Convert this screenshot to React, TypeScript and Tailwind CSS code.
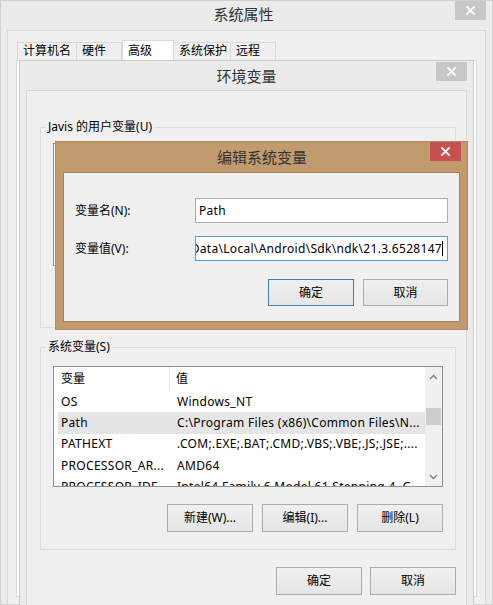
import type { ReactNode } from 'react';

const CloseX = ({ red }: { red?: boolean }) => (
  <div
    className={`flex items-center justify-center w-[31px] h-[19px] ${red ? 'bg-[#c75050]' : 'bg-[#c7c7c7]'}`}
  >
    <svg width="9" height="9" viewBox="0 0 9 9">
      <path d="M1 1 L8 8 M8 1 L1 8" stroke="#fff" strokeWidth="1.8" strokeLinecap="square" />
    </svg>
  </div>
);

const Btn = ({ children, def, w = 'w-[86px]', h = 'h-[28px]' }: { children: ReactNode; def?: boolean; w?: string; h?: string }) => (
  <div
    className={`flex items-center justify-center ${w} ${h} border ${def ? 'border-[#3c7fb1]' : 'border-[#acacac]'} bg-linear-to-b from-[#f0f0f0] to-[#e5e5e5] text-[12px] text-black`}
  >
    {children}
  </div>
);

const TitleBar = ({ title, red, h, textPad = '' }: { title: string; red?: boolean; h: string; textPad?: string }) => (
  <div className={`grid grid-cols-[1fr_auto_1fr] ${h} shrink-0`}>
    <div />
    <div className={`flex items-center text-[15px] text-[#333] ${textPad}`}>{title}</div>
    <div className="flex justify-end items-start">
      <CloseX red={red} />
    </div>
  </div>
);

const Chevron = ({ up }: { up?: boolean }) => (
  <svg width="9" height="6" viewBox="0 0 9 6">
    <path d={up ? 'M1 5 L4.5 1.5 L8 5' : 'M1 1 L4.5 4.5 L8 1'} fill="none" stroke="#7a7a7a" strokeWidth="1.3" />
  </svg>
);

const sysRows = [
  ['OS', 'Windows_NT'],
  ['Path', 'C:\\Program Files (x86)\\Common Files\\N...'],
  ['PATHEXT', '.COM;.EXE;.BAT;.CMD;.VBS;.VBE;.JS;.JSE;....'],
  ['PROCESSOR_AR...', 'AMD64'],
  ['PROCESSOR_IDE...', 'Intel64 Family 6 Model 61 Stepping 4, G...'],
];

const VarList = ({ rows, h, selected }: { rows: string[][]; h: string; selected?: number }) => (
  <div className={`flex ${h} border border-[#8e8f8f] bg-white overflow-hidden`}>
    <div className="flex-1 flex flex-col overflow-hidden">
      <div className="flex h-[24px] shrink-0 items-center">
        <div className="w-[116px] h-full flex items-center pl-[7px] border-r border-[#e5e5e5]">变量</div>
        <div className="pl-[6px]">值</div>
      </div>
      {rows.map(([k, v], i) => (
        <div
          key={k}
          className={`flex items-center h-[21.3px] shrink-0 ml-[4px] whitespace-nowrap tracking-[0.3px] ${i === selected ? 'bg-[#e5e5e5]' : ''}`}
        >
          <div className="w-[112px] pl-[3px]">{k}</div>
          <div className="pl-[7px]">{v}</div>
        </div>
      ))}
    </div>
    <div className="w-[17px] bg-[#f0f0f0] flex flex-col items-center">
      <div className="h-[19px] flex items-center justify-center">
        <Chevron up />
      </div>
      <div className="h-[22px]" />
      <div className="w-[15px] h-[17px] bg-[#cdcdcd]" />
      <div className="flex-1" />
      <div className="h-[19px] flex items-center justify-center">
        <Chevron />
      </div>
    </div>
  </div>
);

const Group = ({ label, children, className }: { label: string; children: ReactNode; className?: string }) => (
  <fieldset className={`border border-[#dcdcdc] w-[416px] ${className ?? ''}`}>
    <legend className="ml-[5px] px-[2px] leading-[16px] text-[12px]">{label}</legend>
    {children}
  </fieldset>
);

const tabs = [
  { t: '计算机名', w: 'w-[60px]' },
  { t: '硬件', w: 'w-[46px]' },
  { t: '高级', w: 'w-[52px]', on: true },
  { t: '系统保护', w: 'w-[58px]' },
  { t: '远程', w: 'w-[46px]' },
];

export default function App() {
  return (
    <div className="relative w-[493px] h-[605px] overflow-hidden bg-[#ebebeb] text-[12px] text-black font-[family-name:'Noto_Sans','Noto_Sans_CJK_SC',sans-serif]">
      {/* 系统属性 */}
      <div className="absolute inset-0 flex flex-col border border-[#d0d0d0] bg-[#ebebeb] px-[6px]">
        <TitleBar title="系统属性" h="h-[29px] -mx-[6px] pr-[6px]" textPad="pb-[3px]" />
        <div className="flex-1 flex flex-col border-t border-x border-[#d9d9d9] bg-[#f0f0f0] px-[8px] pt-[10px]">
          <div className="flex items-end h-[19px] ml-[1px]">
            {tabs.map((tab) => (
              <div
                key={tab.t}
                className={`${tab.w} border-t border-x border-[#d9d9d9] pl-[5px] flex ${
                  tab.on ? 'h-[20px] bg-white items-start pt-[1px] relative z-10' : 'h-[18px] bg-[#f0f0f0] items-end -ml-px first:ml-0'
                }`}
              >
                {tab.t}
              </div>
            ))}
          </div>
          <div className="flex-1 border border-[#d9d9d9] bg-white mb-[7px]" />
        </div>
      </div>

      {/* 环境变量 */}
      <div className="absolute left-[19px] top-[60px] w-[455px] h-[560px] flex flex-col border border-[#cdcdcd] bg-[#ebebeb] px-[6px]">
        <TitleBar title="环境变量" h="h-[29px] pt-[1px]" />
        <div className="flex-1 flex flex-col border-t border-x border-[#d9d9d9] bg-[#f0f0f0] pl-[13px]">
          <Group label="Javis 的用户变量(U)" className="mt-[28px]">
            <div className="mx-[12px] mt-[8px] h-[123px] border border-[#8e8f8f] bg-white" />
            <div className="h-[28px] mt-[17px] mb-[16px]" />
          </Group>
          <Group label="系统变量(S)" className="mt-[11px]">
            <div className="mx-[12px] mt-[11px]">
              <VarList rows={sysRows} h="h-[121px]" selected={1} />
            </div>
            <div className="flex justify-end gap-[9px] mx-[12px] mt-[17px] mb-[17px]">
              <Btn w="w-[86px]">新建(W)...</Btn>
              <Btn w="w-[86px]">编辑(I)...</Btn>
              <Btn w="w-[86px]">删除(L)</Btn>
            </div>
          </Group>
          <div className="flex justify-end gap-[8px] w-[416px] mt-[17px]">
            <Btn>确定</Btn>
            <Btn>取消</Btn>
          </div>
        </div>
      </div>

      {/* 编辑系统变量 */}
      <div className="absolute left-[55px] top-[141px] w-[413px] h-[189px] flex flex-col border border-[#b08c60] bg-[#c19b6e] px-[7px] pb-[7px]">
        <TitleBar title="编辑系统变量" red h="h-[30px] -mr-[1px]" />
        <div className="flex-1 flex flex-col border border-[#a3835b] bg-[#f0f0f0] px-[11px] pt-[25px]">
          <div className="flex items-center">
            <div className="w-[120px]">变量名(N):</div>
            <div className="w-[253px] h-[25px] border border-[#abadb3] bg-white flex items-center px-[3px] tracking-[0.3px]">Path</div>
          </div>
          <div className="flex items-center mt-[13px]">
            <div className="w-[120px]">变量值(V):</div>
            <div className="w-[253px] h-[25px] border border-[#569de5] bg-white flex items-center justify-end overflow-hidden pr-[4px] whitespace-nowrap tracking-[0.3px]">
              <span>C:\Users\Javis\AppData\Local\Android\Sdk\ndk\21.3.6528147</span>
              <span className="w-px h-[15px] bg-black shrink-0" />
            </div>
          </div>
          <div className="flex justify-end gap-[9px] mt-[18px]">
            <Btn def h="h-[27px]">确定</Btn>
            <Btn w="w-[85px]" h="h-[27px]">取消</Btn>
          </div>
        </div>
      </div>
    </div>
  );
}
